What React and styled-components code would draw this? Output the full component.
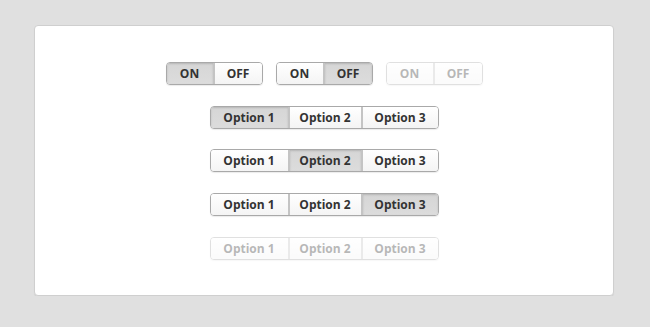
import React from "react"
import styled, { createGlobalStyle, css } from "styled-components"

const GlobalStyle = createGlobalStyle`
  body {
    margin: 0;
    background: #e0e0e0;
    font-family: "Open Sans", "Liberation Sans", sans-serif;
  }
`

const Panel = styled.div`
  box-sizing: border-box;
  margin: 25px 0 0 34px;
  width: 580px;
  height: 271px;
  padding-top: 36px;
  background: #fff;
  border: 1px solid #cfcfcf;
  border-radius: 4px;
  box-shadow: 0 1px 1px rgba(0, 0, 0, 0.06);
  display: flex;
  flex-direction: column;
  align-items: center;
  gap: 20.7px;
`

const Row = styled.div`
  display: flex;
  gap: 13px;
`

const Group = styled.div`
  display: flex;
  border: 1px solid #a9a9a9;
  border-radius: 4px;
  overflow: hidden;
  box-shadow: 0 1px 1px rgba(0, 0, 0, 0.08);
  opacity: ${p => (p.$disabled ? 0.35 : 1)};
`

const Segment = styled.div`
  width: ${p => p.$w}px;
  height: 21px;
  display: flex;
  align-items: center;
  justify-content: center;
  font-size: 12px;
  font-weight: 700;
  color: #333;
  background: linear-gradient(#ffffff, #f4f4f4);
  & + & {
    border-left: 2px solid #c4c4c4;
  }
  ${p =>
    p.$active &&
    css`
      background: linear-gradient(#d6d6d6, #dcdcdc);
      box-shadow: inset 0 1px 2px rgba(0, 0, 0, 0.15);
    `}
`

const toggles = [
  { active: 0 },
  { active: 1 },
  { active: -1, disabled: true },
]

const optionRows = [
  { active: 0 },
  { active: 1 },
  { active: 2 },
  { active: -1, disabled: true },
]

const App = () => (
  <>
    <GlobalStyle />
    <Panel>
      <Row>
        {toggles.map((t, i) => (
          <Group key={i} $disabled={t.disabled}>
            <Segment $w={46} $active={t.active === 0}>ON</Segment>
            <Segment $w={47} $active={t.active === 1}>OFF</Segment>
          </Group>
        ))}
      </Row>
      {optionRows.map((r, i) => (
        <Group key={i} $disabled={r.disabled}>
          {["Option 1", "Option 2", "Option 3"].map((o, j) => (
            <Segment key={o} $w={j === 0 ? 77 : j === 1 ? 71 : 75} $active={r.active === j}>
              {o}
            </Segment>
          ))}
        </Group>
      ))}
    </Panel>
  </>
)

export default App
